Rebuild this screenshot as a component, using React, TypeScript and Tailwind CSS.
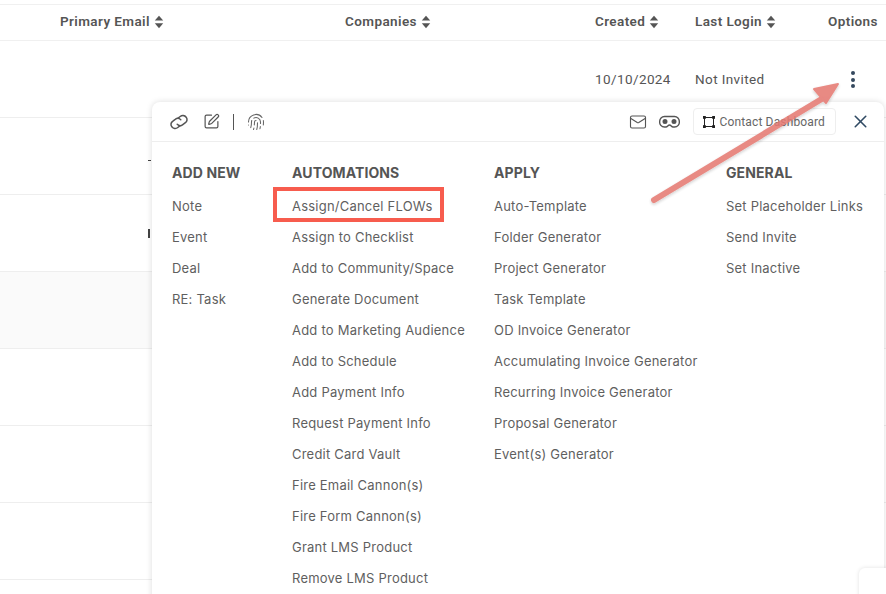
import { Fingerprint, Mail, SquarePen, X } from 'lucide-react';

const rows = [
  { bg: 'bg-white', created: '10/10/2024', login: 'Not Invited' },
  { bg: 'bg-white', mark: 'w-[3px] h-[1px] mt-[9px]' },
  { bg: 'bg-white', mark: 'w-[2px] h-[9px] mt-[1px]' },
  { bg: 'bg-[#fafafa]' },
  { bg: 'bg-white' },
  { bg: 'bg-white' },
  { bg: 'bg-white' },
  { bg: 'bg-white' },
];

const columns = [
  {
    title: 'ADD NEW',
    width: 'w-[120px]',
    items: ['Note', 'Event', 'Deal', 'RE: Task'],
  },
  {
    title: 'AUTOMATIONS',
    width: 'w-[202px]',
    items: [
      'Assign/Cancel FLOWs',
      'Assign to Checklist',
      'Add to Community/Space',
      'Generate Document',
      'Add to Marketing Audience',
      'Add to Schedule',
      'Add Payment Info',
      'Request Payment Info',
      'Credit Card Vault',
      'Fire Email Cannon(s)',
      'Fire Form Cannon(s)',
      'Grant LMS Product',
      'Remove LMS Product',
    ],
  },
  {
    title: 'APPLY',
    width: 'w-[232px]',
    items: [
      'Auto-Template',
      'Folder Generator',
      'Project Generator',
      'Task Template',
      'OD Invoice Generator',
      'Accumulating Invoice Generator',
      'Recurring Invoice Generator',
      'Proposal Generator',
      'Event(s) Generator',
    ],
  },
  {
    title: 'GENERAL',
    width: 'w-[150px]',
    items: ['Set Placeholder Links', 'Send Invite', 'Set Inactive'],
  },
];

function SortIcon() {
  return (
    <svg width="10" height="14" viewBox="0 0 10 14" className="text-[#555]" fill="currentColor">
      <path d="M5 0.8 9.2 5.6 0.8 5.6Z" />
      <path d="M5 13.200 9.200 8.200 0.800 8.200Z" />
    </svg>
  );
}

function HeaderCell({ label, width, sort = true }: { label: string; width: string; sort?: boolean }) {
  return (
    <div className={`${width} flex items-center gap-[4px] shrink-0`}>
      <span>{label}</span>
      {sort && <SortIcon />}
    </div>
  );
}

function LinkIcon() {
  return (
    <svg width="20" height="20" viewBox="0 0 20 20" fill="none" stroke="#555" strokeWidth="1.500" strokeLinecap="round">
      <path d="M8.800 6.300 11.200 4.500a4.300 4.300 0 0 1 6 0.700 3.800 3.800 0 0 1-0.800 5.500L13.800 12.600a4.300 4.300 0 0 1-5.600-0.300" />
      <path d="M11.200 13.700 8.800 15.500a4.300 4.300 0 0 1-6-0.700 3.800 3.800 0 0 1 0.800-5.500L6.200 7.400a4.300 4.300 0 0 1 5.600 0.300" />
    </svg>
  );
}

function GogglesIcon() {
  return (
    <svg width="21" height="14" viewBox="0 0 21 14" fill="none" stroke="#555" strokeWidth="1.400">
      <path d="M5.500 1.500h10a4.800 4.800 0 0 1 4.800 5 4.800 4.800 0 0 1-4.800 5.500h-1.500c-1.500 0-2-2-3.500-2s-2 2-3.500 2H5.500a4.800 4.800 0 0 1-4.800-5.500 4.800 4.800 0 0 1 4.800-5Z" />
      <circle cx="6" cy="6.500" r="1.800" fill="#555" />
      <circle cx="15" cy="6.500" r="1.800" fill="#555" />
    </svg>
  );
}

function FrameIcon() {
  return (
    <svg width="12" height="12" viewBox="0 0 12 12" fill="none" stroke="#222" strokeWidth="1">
      <rect x="1.500" y="1.500" width="9" height="9" />
      <rect x="0.500" y="0.500" width="1.800" height="1.800" fill="#222" />
      <rect x="9.700" y="0.500" width="1.800" height="1.800" fill="#222" />
      <rect x="0.500" y="9.700" width="1.800" height="1.800" fill="#222" />
      <rect x="9.700" y="9.700" width="1.800" height="1.800" fill="#222" />
    </svg>
  );
}

function ActionMenu() {
  return (
    <div className="absolute left-[152px] top-[102px] w-[732px] h-[520px] bg-white rounded-t-[8px] shadow-[0_0_6px_rgba(0,0,0,0.14)]">
      <div className="h-[40px] flex items-center pl-[17px] pr-[13px] border-b border-[#eeeeee]">
        <LinkIcon />
        <SquarePen size={17} strokeWidth={1.700} className="ml-[14px] text-[#555]" />
        <div className="w-px h-[16px] bg-[#555] ml-[13px]" />
        <Fingerprint size={18} strokeWidth={1.400} className="ml-[13px] text-[#666]" />
        <Mail size={18} strokeWidth={1.500} className="ml-auto text-[#555]" />
        <div className="ml-[12px]">
          <GogglesIcon />
        </div>
        <div className="ml-[13px] w-[143px] h-[27px] flex items-center justify-end gap-[4px] pr-[10px] bg-white border border-[#eeeeee] rounded-[4px] text-[12px] tracking-[0.15px] text-[#666]">
          <FrameIcon />
          Contact Dashboard
        </div>
        <X size={21} strokeWidth={1.800} className="ml-[14px] text-[#2f4a63]" />
      </div>
      <div className="flex pl-[20px] pt-[20px]">
        {columns.map((col) => (
          <div key={col.title} className={`${col.width} shrink-0`}>
            <div className="h-[20px] flex items-center font-['Inter',sans-serif] text-[14px] font-bold tracking-[0.1px] text-[#555]">
              {col.title}
            </div>
            <div className="mt-[9px] flex flex-col">
              {col.items.map((item) => (
                <div
                  key={item}
                  className="h-[31px] flex items-center font-['Inter',sans-serif] text-[13px] tracking-[0.22px] text-[#5f5f5f] whitespace-nowrap"
                >
                  {item}
                </div>
              ))}
            </div>
          </div>
        ))}
      </div>
      {/* red highlight drawn on top of the screenshot */}
      <div className="absolute left-[121px] top-[85px] w-[171px] h-[35px] border-[4px] border-[#f75c4e]" />
    </div>
  );
}

export default function App() {
  return (
    <div className="relative w-[886px] h-[594px] overflow-hidden bg-white font-['Roboto',sans-serif]">
      <div className="pt-[4px]">
        <div className="h-[37px] pb-[2px] flex items-center border-y border-[#f0f0f0] text-[13.500px] font-semibold tracking-[0.4px] text-[#555]">
          <div className="w-[60px] shrink-0" />
          <HeaderCell label="Primary Email" width="w-[285px]" />
          <HeaderCell label="Companies" width="w-[250px]" />
          <HeaderCell label="Created" width="w-[100px]" />
          <HeaderCell label="Last Login" width="w-[133px]" />
          <HeaderCell label="Options" width="w-[50px]" sort={false} />
        </div>
        {rows.map((row, i) => (
          <div key={i} className={`h-[77px] ${row.bg} border-b border-[#eeeeee] flex items-center text-[13.500px] tracking-[0.4px] text-[#555]`}>
            {row.mark && <span className={`ml-[148px] bg-[#444] ${row.mark}`} />}
            {row.created && (
              <>
                <div className="ml-[595px] w-[100px] pt-[1px]">{row.created}</div>
                <div className="w-[133px] pt-[1px]">{row.login}</div>
                <div className="w-[50px] pl-[23px] pt-[1px] flex flex-col gap-[2.500px]">
                  <span className="w-[4px] h-[4px] rounded-full bg-[#34495e]" />
                  <span className="w-[4px] h-[4px] rounded-full bg-[#34495e]" />
                  <span className="w-[4px] h-[4px] rounded-full bg-[#34495e]" />
                </div>
              </>
            )}
          </div>
        ))}
      </div>

      <ActionMenu />

      {/* corner of the floating card behind, bottom right */}
      <div className="absolute left-[859px] top-[568px] w-[60px] h-[60px] bg-white rounded-[6px] shadow-[0_0_4px_rgba(0,0,0,0.12)]" />

      {/* annotation arrow */}
      <svg className="absolute left-0 top-0 pointer-events-none" width="886" height="594" viewBox="0 0 886 594" fill="none">
        <defs>
          <filter id="arrowShadow" x="-10%" y="-10%" width="120%" height="130%">
            <feDropShadow dx="0" dy="1.500" stdDeviation="1.500" floodColor="#000" floodOpacity="0.22" />
          </filter>
        </defs>
        <g filter="url(#arrowShadow)" opacity="0.88">
          <path d="M654 200 825 97" stroke="#e57a73" strokeWidth="6" strokeLinecap="round" />
          <path d="M838 84 814 89 826 103Z" fill="#e57a73" stroke="#e57a73" strokeWidth="2" strokeLinejoin="round" />
        </g>
      </svg>
    </div>
  );
}
